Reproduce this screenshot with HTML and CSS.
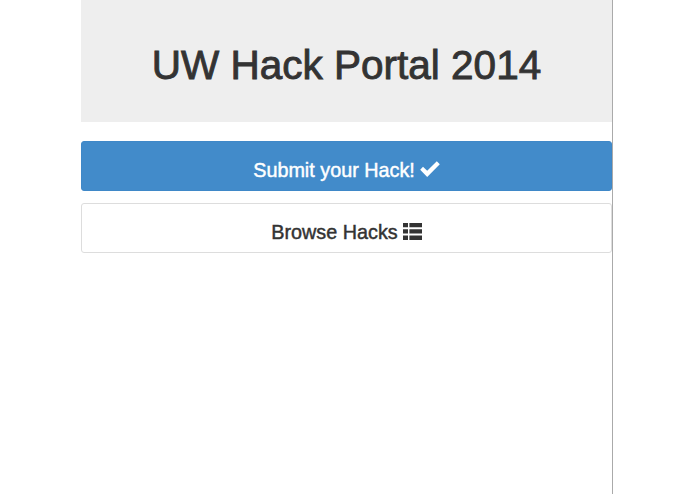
FILE: index.html
```html
<!DOCTYPE html>
<html lang="en">
<head>
    <meta charset="UTF-8">
    <title>UW Hack Portal 2014</title>
    <link rel="stylesheet" href="styles.css">
</head>
<body>
    <div class="container">
        <div class="jumbotron">
            <h1>UW Hack Portal 2014</h1>
        </div>

        <a class="btn btn-primary" href="#">Submit your Hack!
            <svg class="icon-check" viewBox="0 0 20 16"><path d="M0.2 8.8 L3 5.8 L7.2 9.8 L16.8 0.2 L19.8 3.2 L7.2 16 Z"/></svg>
        </a>
        <a class="btn btn-default" href="#">Browse Hacks
            <svg class="icon-list" viewBox="0 0 19 17"><path d="M0 0H5V4.2H0ZM6.4 0H19V4.2H6.4ZM0 6.2H5V10.6H0ZM6.4 6.2H19V10.6H6.4ZM0 12.6H5V17H0ZM6.4 12.6H19V17H6.4Z"/></svg>
        </a>
    </div>
</body>
</html>
```

FILE: styles.css
```css
html, body {
    margin: 0;
    height: 100%;
    background-color: #fff;
}

body {
    font-family: "Liberation Sans", Arial, sans-serif;
    color: #333;
    overflow: hidden;
}

.container {
    box-sizing: border-box;
    width: 532px;
    height: 494px;
    margin-left: 81px;
    border-right: 1px solid #aaa;
}

.jumbotron {
    height: 122px;
    margin-bottom: 19px;
    display: flex;
    align-items: center;
    justify-content: center;
    background-color: #eee;
}

h1 {
    margin: 8px 0 0;
    font-size: 40.5px;
    font-weight: normal;
    -webkit-text-stroke: 0.9px #333;
}

.btn {
    box-sizing: border-box;
    display: flex;
    align-items: center;
    justify-content: center;
    gap: 5px;
    height: 50px;
    padding-top: 8px;
    margin-bottom: 12px;
    border: 1px solid transparent;
    border-radius: 3px;
    font-size: 19.8px;
    text-decoration: none;
}

.btn-primary {
    background-color: #428bca;
    border-color: #3f88c8;
    color: #fff;
    -webkit-text-stroke: 0.45px #fff;
}

.btn-default {
    background-color: #fff;
    border-color: #ddd;
    color: #333;
    -webkit-text-stroke: 0.45px #333;
}

.icon-check {
    width: 20px;
    height: 16px;
    margin-top: -2px;
    fill: #fff;
}

.icon-list {
    width: 19px;
    height: 17px;
    margin-top: -1px;
    fill: #333;
}
```
